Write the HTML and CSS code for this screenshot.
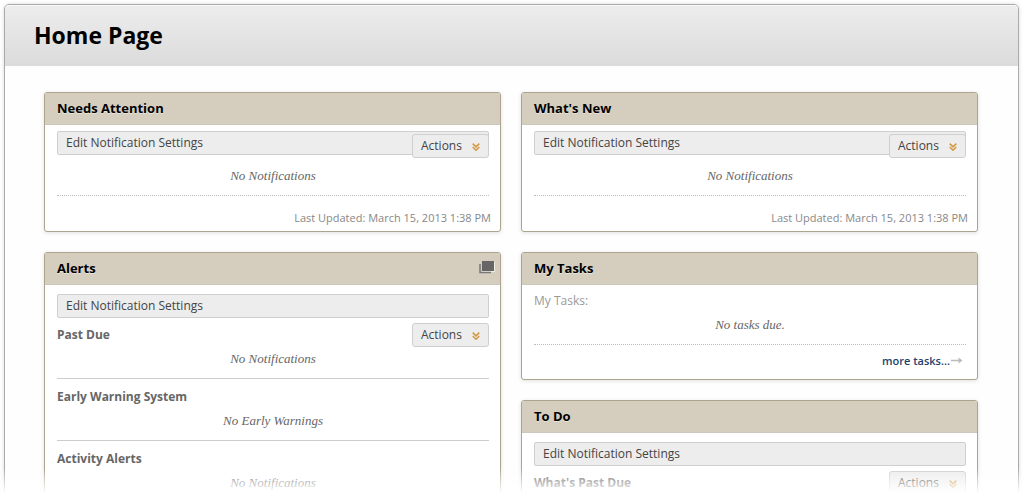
FILE: index.html
```html
<!DOCTYPE html>
<html lang="en">
<head>
<meta charset="utf-8">
<title>Home Page</title>
<link rel="stylesheet" href="styles.css">
</head>
<body>
<svg class="defs" aria-hidden="true">
  <symbol id="chevrons" viewBox="0 0 8 8"><path d="M.7 .6 4 3.800 7.300 .6M.7 4 4 7.200 7.300 4" fill="none" stroke="#d39a48" stroke-width="1.600"/></symbol>
</svg>
<div class="page">
  <header class="page-head"><h1>Home Page</h1></header>
  <main class="columns">
    <div class="column">
      <section class="panel">
        <h2 class="panel-head">Needs Attention</h2>
        <div class="panel-body compact">
          <button class="settings">Edit Notification Settings</button>
          <button class="actions over">Actions <svg class="chev"><use href="#chevrons"/></svg></button>
          <p class="empty spaced">No Notifications</p>
          <p class="updated">Last Updated: March 15, 2013 1:38 PM</p>
        </div>
      </section>
      <section class="panel">
        <h2 class="panel-head">Alerts
          <button class="window" aria-label="Open in new window"><svg width="16" height="13" viewBox="0 0 16 13"><path d="M3 1h13v10H3z" fill="#eeebe2"/><path d="M1 3v8.500H12" fill="none" stroke="#777" stroke-width="1.500"/><path d="M3 0h12v10H3z" fill="#666"/></svg></button>
        </h2>
        <div class="panel-body">
          <button class="settings">Edit Notification Settings</button>
          <div class="group first">
            <div class="group-head"><h3>Past Due</h3><button class="actions">Actions <svg class="chev"><use href="#chevrons"/></svg></button></div>
            <p class="empty">No Notifications</p>
          </div>
          <div class="group">
            <div class="group-head"><h3>Early Warning System</h3></div>
            <p class="empty">No Early Warnings</p>
          </div>
          <div class="group">
            <div class="group-head"><h3>Activity Alerts</h3></div>
            <p class="empty">No Notifications</p>
          </div>
        </div>
      </section>
    </div>
    <div class="column">
      <section class="panel">
        <h2 class="panel-head">What's New</h2>
        <div class="panel-body compact">
          <button class="settings">Edit Notification Settings</button>
          <button class="actions over">Actions <svg class="chev"><use href="#chevrons"/></svg></button>
          <p class="empty spaced">No Notifications</p>
          <p class="updated">Last Updated: March 15, 2013 1:38 PM</p>
        </div>
      </section>
      <section class="panel">
        <h2 class="panel-head">My Tasks</h2>
        <div class="panel-body compact">
          <p class="label">My Tasks:</p>
          <p class="empty tasks">No tasks due.</p>
          <p class="more"><a href="#">more tasks...<svg width="12" height="8" viewBox="0 0 12 8"><path d="M0 3.500h10" stroke="#bbb" stroke-width="1.500"/><path d="M7.500 .5 11.500 3.500 7.500 6.500z" fill="#bbb"/></svg></a></p>
        </div>
      </section>
      <section class="panel last">
        <h2 class="panel-head">To Do</h2>
        <div class="panel-body">
          <button class="settings">Edit Notification Settings</button>
          <div class="group first">
            <div class="group-head"><h3>What's Past Due</h3><button class="actions">Actions <svg class="chev"><use href="#chevrons"/></svg></button></div>
          </div>
        </div>
      </section>
    </div>
  </main>
  <div class="fade"></div>
</div>
</body>
</html>
```
FILE: styles.css
```css
* { box-sizing: border-box; }

body {
  margin: 0;
  height: 100vh;
  overflow: hidden;
  padding: 4px 5px 0 4px;
  background: #fff;
  color: #444;
  font: 12px/20px "Open Sans", "Noto Sans", sans-serif;
}

h1, h2, h3, p { margin: 0; }

button {
  font: inherit;
  color: inherit;
  cursor: pointer;
}

.defs {
  position: absolute;
  width: 0;
  height: 0;
}

.page {
  height: 100%;
  overflow: hidden;
  border: 1px solid #aaa;
  border-radius: 5px 5px 0 0;
  box-shadow: 0 0 4px rgba(0, 0, 0, 0.15);
  background: #fefefe;
}

.page-head {
  padding: 15px 29px 16px;
  border-radius: 4px 4px 0 0;
  background: linear-gradient(#ededed, #dbdbdb);
  box-shadow: inset 0 1px #f8f8f8;
}

.page-head h1 {
  color: #000;
  font-size: 23px;
  line-height: 30px;
}

.columns {
  display: grid;
  grid-template-columns: 1fr 1fr;
  gap: 20px;
  padding: 26px 40px 0 39px;
}

.column {
  display: flex;
  flex-direction: column;
  gap: 20px;
}

.panel {
  border: 1px solid #aca48e;
  border-radius: 3px;
  background: #fff;
  box-shadow: 0 1px 4px rgba(0, 0, 0, 0.12);
}

.panel.last { flex-grow: 1; }

.panel-head {
  display: flex;
  justify-content: space-between;
  align-items: center;
  height: 32px;
  padding: 0 5px 2px 12px;
  border-bottom: 1px solid #ccc8bc;
  border-radius: 2px 2px 0 0;
  background: #d5cebe;
  color: #000;
  font-size: 13px;
  text-shadow: 0 1px #e8e4da;
}

.window {
  display: flex;
  padding: 0;
  border: 0;
  background: none;
}

.panel-body {
  position: relative;
  padding: 9px 11px 9px 12px;
}

.panel-body.compact { padding: 6px 11px 3px 12px; }

.settings {
  display: block;
  width: 100%;
  height: 24px;
  padding: 0 8px;
  border: 1px solid #cfcfcf;
  border-radius: 2px;
  background: #ededed;
  line-height: 20px;
  text-align: left;
}

.actions {
  display: flex;
  align-items: center;
  justify-content: space-between;
  width: 77px;
  height: 24px;
  padding: 0 8px;
  border: 1px solid #cfcfcf;
  border-radius: 3px;
  background: #ededed;
}

.actions.over {
  position: absolute;
  top: 9px;
  right: 11px;
}

.chev {
  width: 8px;
  height: 8px;
  margin-top: 2px;
}

.empty {
  color: #666;
  font: italic 13px/20px "Liberation Serif", serif;
  text-align: center;
}

.empty.spaced {
  padding: 11px 0 9px;
  border-bottom: 1px dotted #bbb;
}

.updated {
  margin: 12px -2px 0 0;
  color: #888;
  font-size: 11px;
  text-align: right;
}

.group {
  padding: 8px 0 9px;
  border-bottom: 1px solid #ccc;
}

.group.first { padding-top: 7px; }

.group-head {
  display: flex;
  align-items: center;
  justify-content: space-between;
  height: 20px;
  margin-bottom: 4px;
}

.group-head h3 {
  color: #666;
  font-size: 12px;
}

.label { color: #999; }

.empty.tasks {
  padding: 4px 0 9px;
  border-bottom: 1px dotted #bbb;
}

.more {
  padding: 6px 3px 5px 0;
  font-size: 11px;
  font-weight: 600;
  text-align: right;
}

.more a {
  color: #1c3f6e;
  text-decoration: none;
}

.more svg { margin-left: 1px; }

.fade {
  position: fixed;
  right: 0;
  bottom: 0;
  left: 0;
  height: 28px;
  background: linear-gradient(rgba(255, 255, 255, 0), #fff 90%);
  pointer-events: none;
}
```
